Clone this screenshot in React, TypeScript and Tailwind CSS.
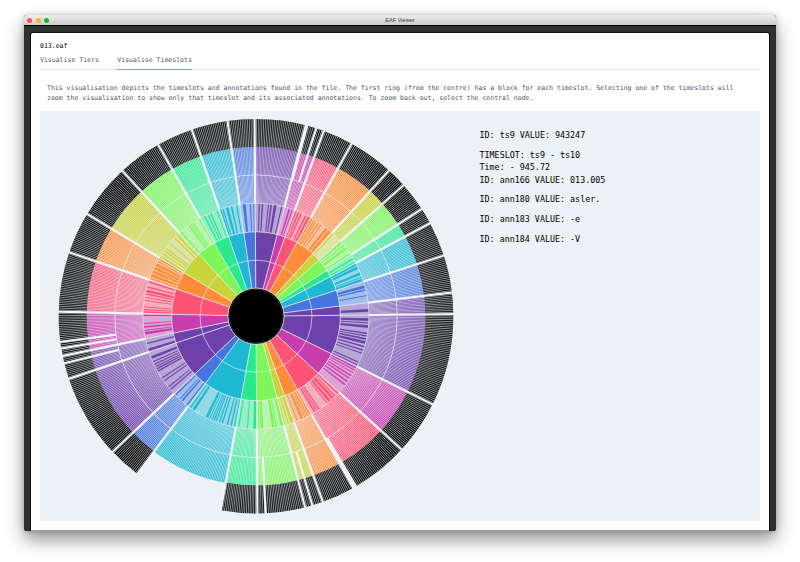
import React from 'react';

const CX = 216;
const CY = 205.2;
const R = [28, 56, 84.4, 113, 141.2, 169.4, 197.3];
const LEAF = 0.54;

const PURPLE = '#6e40aa';
const MAGENTA = '#c83dac';
const PINK = '#ff5375';
const ORANGE = '#ff8c38';
const OLIVE = '#c9d33a';
const LIME = '#7cf659';
const GREEN = '#28ea8d';
const CYAN = '#1fb8d2';
const BLUE = '#4576dd';

type Sector = { a: number; b: number; color: string; noLeaf?: boolean; outerFrom?: number; outerTo?: number };

const sectors: Sector[] = [
  { a: -0.4, b: 14.6, color: PURPLE },
  { a: 14.6, b: 20.1, color: MAGENTA, outerFrom: 15.4 },
  { a: 20.1, b: 29, color: PINK },
  { a: 29, b: 42.4, color: ORANGE },
  { a: 42.4, b: 48.4, color: OLIVE },
  { a: 48.4, b: 57.1, color: LIME },
  { a: 57.1, b: 61.9, color: GREEN },
  { a: 61.9, b: 72.1, color: CYAN },
  { a: 72.1, b: 83.1, color: BLUE },
  { a: 83.1, b: 89.4, color: PURPLE },
  { a: 89.4, b: 116.5, color: PURPLE },
  { a: 116.5, b: 132.5, color: MAGENTA },
  { a: 132.5, b: 150.5, color: PINK, outerTo: 149.2 },
  { a: 150.5, b: 160.2, color: ORANGE },
  { a: 160.2, b: 165.6, color: OLIVE },
  { a: 165.6, b: 179.6, color: LIME },
  { a: 179.6, b: 190.3, color: GREEN },
  { a: 190.3, b: 217, color: CYAN, noLeaf: true },
  { a: 217, b: 226.6, color: BLUE },
  { a: 226.6, b: 251.5, color: PURPLE },
  { a: 251.5, b: 258.4, color: PURPLE },
  { a: 258.4, b: 271.3, color: MAGENTA },
  { a: 271.3, b: 288.9, color: PINK },
  { a: 288.9, b: 301.2, color: ORANGE },
  { a: 301.2, b: 317.4, color: OLIVE },
  { a: 317.4, b: 330.3, color: LIME },
  { a: 330.3, b: 341, color: GREEN },
  { a: 341, b: 351.7, color: CYAN },
  { a: 351.7, b: 359.6, color: BLUE },
];

const innerSplits = [17.8, 163.4, 177.2, 256.2, 260.6, 262.5];

const pt = (r: number, deg: number) => {
  const t = (deg * Math.PI) / 180;
  return `${(CX + r * Math.sin(t)).toFixed(2)} ${(CY - r * Math.cos(t)).toFixed(2)}`;
};

const wedge = (r0: number, r1: number, a: number, b: number) =>
  `M${pt(r0, a)}L${pt(r1, a)}A${r1} ${r1} 0 0 1 ${pt(r1, b)}L${pt(r0, b)}A${r0} ${r0} 0 0 0 ${pt(r0, a)}Z`;

const ray = (r0: number, r1: number, a: number) => `M${pt(r0, a)}L${pt(r1, a)}`;

const arcs = (r: number) => `M${CX - r} ${CY}a${r} ${r} 0 1 1 ${2 * r} 0a${r} ${r} 0 1 1 ${-2 * r} 0`;

let seed = 20;
const random = () => {
  seed = (seed * 16807) % 2147483647;
  return seed / 2147483647;
};

function leafRays(s: Sector, r0: number, r1: number) {
  const n = Math.max(1, Math.round((s.b - s.a) / LEAF));
  let d = '';
  for (let i = 1; i < n; i++) d += ray(r0, r1, s.a + ((s.b - s.a) * i) / n);
  return d;
}

function mergedWedges(s: Sector) {
  let d = '';
  let a = s.a + 0.4;
  while (a < s.b - 0.8) {
    const w = 0.5 + (random() > 0.78 ? 0.9 : random() * 0.4);
    if (random() > 0.25) d += wedge(R[2], R[3], a, Math.min(s.b - 0.2, a + w));
    a += w + 0.45 + random() * 0.8;
  }
  return d;
}

const stripes = sectors.map(mergedWedges);

function Sunburst() {
  return (
    <svg className="block h-[410px] w-[430px] shrink-0" viewBox="0 0 430 410">
      {sectors.map((s, i) => {
        const from = s.outerFrom ?? s.a;
        const to = s.outerTo ?? s.b;
        return (
          <g key={i}>
            <path d={wedge(R[0], R[2], s.a, s.b)} fill={s.color} />
            <path d={wedge(R[2], R[4], s.a, s.b)} fill={s.color} />
            <path d={wedge(R[4], R[5], from, to)} fill={s.color} />
            <path d={wedge(R[2], R[3], s.a, s.b)} fill="#ebf1f5" fillOpacity={0.58} />
            <path d={stripes[i]} fill={s.color} />
            <path d={leafRays(s, R[3], R[4])} stroke="#ebf1f5" strokeWidth={0.6} fill="none" />
            <path d={leafRays(s, R[4], R[5])} stroke="#ebf1f5" strokeWidth={0.58} fill="none" />
            {!s.noLeaf && <path d={wedge(R[5], R[6], from, to)} fill="#000" />}
            {!s.noLeaf && <path d={leafRays(s, R[5], R[6])} stroke="#ebf1f5" strokeWidth={0.62} fill="none" />}
          </g>
        );
      })}
      {sectors.map((s, i) => (
        <g key={i} fill="none">
          <path d={ray(R[0], R[3], s.a)} stroke="#ebf1f5" strokeOpacity={0.75} strokeWidth={1} />
          <path d={ray(R[3], R[6] + 1, s.a)} stroke="#f0f5f9" strokeWidth={2.2} />
        </g>
      ))}
      {innerSplits.map((a) => (
        <path key={a} d={ray(R[4], R[6] + 1, a)} stroke="#f0f5f9" strokeWidth={2.1} fill="none" />
      ))}
      {[R[1], R[2], R[3], R[4]].map((r) => (
        <path key={r} d={arcs(r)} fill="none" stroke="#ebf1f5" strokeOpacity={0.65} strokeWidth={1} />
      ))}
      <circle cx={CX} cy={CY} r={28.1} fill="#000" stroke="#ebf1f5" strokeOpacity={0.85} strokeWidth={0.9} />
      <circle cx={CX} cy={CY} r={26.6} fill="none" stroke="#777" strokeWidth={0.35} />
    </svg>
  );
}

export default function App() {
  return (
    <div className="h-[562px] w-[800px] overflow-hidden bg-white px-6 pt-[15px] font-['DejaVu_Sans_Mono',monospace]">
      <div className="flex h-[516px] w-[752px] flex-col overflow-hidden rounded-t-[3px] rounded-b-[2px] bg-[#2d3130] shadow-[0_9px_18px_rgba(0,0,0,0.42),0_0_5px_rgba(0,0,0,0.2)]">
        <div className="grid h-[11px] shrink-0 grid-cols-3 items-center border-b border-black bg-linear-to-b from-[#ececec] to-[#cecece] px-[3px] pt-px">
          <div className="flex gap-[3.5px]">
            <span className="size-[5px] rounded-full bg-[#fc4f4b]" />
            <span className="size-[5px] rounded-full bg-[#fdb424]" />
            <span className="size-[5px] rounded-full bg-[#16b52c]" />
          </div>
          <div className="text-center font-['Liberation_Sans',sans-serif] text-[5.6px] leading-none text-[#3c3c3c]">EAF Viewer</div>
        </div>
        <div className="flex min-h-0 flex-1 px-[7px] pt-[7px]">
          <main className="w-[738px] shrink-0 rounded-t-[2px] border-b border-[#9aa0a3] bg-white px-[9px] text-[6.52px] text-[#4a5568] shadow-[0_0_0_1px_#111]">
            <div className="pt-[8px] leading-[10px] text-black">013.eaf</div>
            <nav className="mt-[5px] flex h-[14px] w-[720px] gap-[18.5px] border-b border-[#e2e8f0] leading-[9px]">
              <span>Visualise Tiers</span>
              <span className="h-[14px] border-b border-[#7f9cf5]">Visualise Timeslots</span>
            </nav>
            <p className="mt-[13px] h-[28px] pl-[7px] leading-[10px] whitespace-nowrap">
              This visualisation depicts the timeslots and annotations found in the file. The first ring (from the centre) has a block for each timeslot. Selecting one of the timeslots will
              <br />
              zoom the visualisation to show only that timeslot and its associated annotations. To zoom back out, select the central node.
            </p>
            <section className="flex h-[410px] w-[720px] rounded-[1px] bg-[#ebf1f5]">
              <Sunburst />
              <div className="pt-[18px] pl-[9.5px] text-[8.37px] leading-[12.2px] text-black">
                <p>ID: ts9 VALUE: 943247</p>
                <p className="mt-2">TIMESLOT: ts9 - ts10</p>
                <p>Time: - 945.72</p>
                <p>ID: ann166 VALUE: 013.005</p>
                <p className="mt-[7.5px]">ID: ann180 VALUE: asler.</p>
                <p className="mt-[7.5px]">ID: ann183 VALUE: -e</p>
                <p className="mt-[7.5px]">ID: ann184 VALUE: -V</p>
              </div>
            </section>
          </main>
        </div>
      </div>
    </div>
  );
}
